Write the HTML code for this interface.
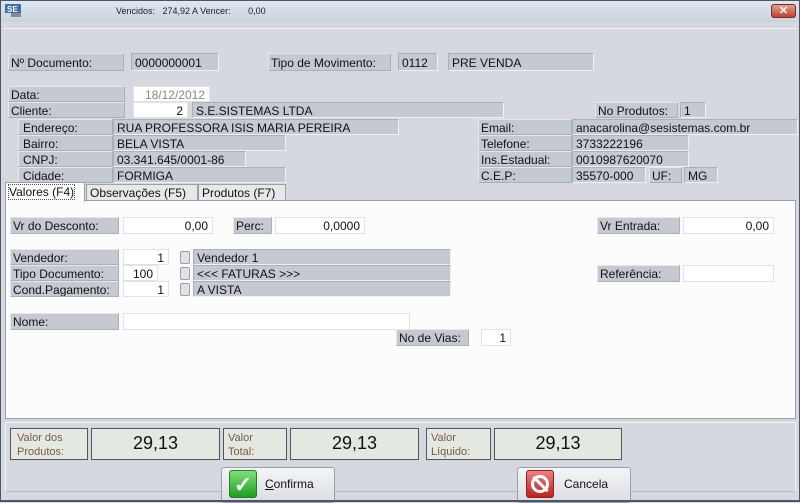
<!DOCTYPE html>
<html><head><meta charset="utf-8"><style>
*{box-sizing:border-box;margin:0;padding:0}
body{width:800px;height:502px;overflow:hidden;background:#d5d8de;font-family:"Liberation Sans",sans-serif;font-size:12px;color:#111;position:relative}
.a{position:absolute;white-space:nowrap;line-height:14px;overflow:hidden}
.l{background:#c4c9d2;border:1px solid #e4e7eb;border-right-color:#aab0b9;border-bottom-color:#aab0b9;padding:1px 2px}
.v{background:#c4c9d2;border:1px solid #aab0b9;border-right-color:#eef0f3;border-bottom-color:#eef0f3;padding:1px 3px}
.w{background:#fff;border:1px solid #e0e2e6;padding:1px 4px;text-align:right}
.b{background:#dfe2e6;border:1px solid #9aa0a8;border-radius:2px}
.t{border:1px solid #555;background:#e3e8e1}
</style></head><body>
<div class="a" style="left:0;top:0;width:800px;height:22px;background:linear-gradient(#dfe7f0,#c9d3de);border:1px solid #4b5766;border-bottom:none"></div>
<div class="a" style="top:4px;left:5px;width:16px;height:13px">
<svg width="16" height="13"><rect x="0" y="0" width="16" height="9" fill="#3f6fb0"/><text x="2" y="8" font-size="8" fill="#fff" font-family="Liberation Sans" font-weight="bold">SE</text><rect x="6" y="9" width="10" height="4" fill="#888"/></svg></div>
<div class="a" style="left:116px;top:4px;font-size:9px;color:#222">Vencidos:&nbsp;&nbsp; 274,92 A Vencer:&nbsp;&nbsp;&nbsp;&nbsp;&nbsp;&nbsp;&nbsp;0,00</div>
<div class="a" style="left:771px;top:4px;width:25px;height:14px;background:linear-gradient(#e8a090,#c0402c);border:1px solid #7a2a20;border-radius:3px;color:#fff;font-size:11px;line-height:12px;text-align:center;font-weight:bold">✕</div>
<div class="a" style="left:0;top:22px;width:800px;height:480px;border:1px solid #4b5766;border-top:none"></div>
<div class="a" style="left:4px;top:28px;width:792px;height:1px;background:#f4f5f7"></div>

<div class="a l" style="left:8px;top:53px;width:116px;height:18px;padding-top:2px">Nº Documento:</div>
<div class="a v" style="left:131px;top:53px;width:88px;height:18px;padding-top:2px">0000000001</div>
<div class="a l" style="left:268px;top:53px;width:123px;height:18px;padding-top:2px">Tipo de Movimento:</div>
<div class="a v" style="left:398px;top:53px;width:40px;height:18px;padding-top:2px">0112</div>
<div class="a v" style="left:448px;top:53px;width:146px;height:18px;padding-top:2px">PRE VENDA</div>

<div class="a l" style="left:8px;top:86px;width:117px;height:16px">Data:</div>
<div class="a w" style="left:133px;top:86px;width:77px;height:16px;color:#888">18/12/2012</div>
<div class="a l" style="left:8px;top:102px;width:117px;height:16px">Cliente:</div>
<div class="a w" style="left:133px;top:102px;width:55px;height:16px">2</div>
<div class="a v" style="left:192px;top:102px;width:312px;height:16px">S.E.SISTEMAS LTDA</div>
<div class="a l" style="left:595px;top:102px;width:83px;height:16px">No Produtos:</div>
<div class="a v" style="left:680px;top:102px;width:26px;height:16px">1</div>

<div class="a l" style="left:18px;top:119px;width:95px;height:16px;padding-left:4px">Endereço:</div>
<div class="a v" style="left:113px;top:119px;width:286px;height:16px">RUA PROFESSORA ISIS MARIA PEREIRA</div>
<div class="a l" style="left:18px;top:135px;width:95px;height:16px;padding-left:4px">Bairro:</div>
<div class="a v" style="left:113px;top:135px;width:173px;height:16px">BELA VISTA</div>
<div class="a l" style="left:18px;top:151px;width:95px;height:16px;padding-left:4px">CNPJ:</div>
<div class="a v" style="left:113px;top:151px;width:133px;height:16px">03.341.645/0001-86</div>
<div class="a l" style="left:18px;top:167px;width:95px;height:16px;padding-left:4px">Cidade:</div>
<div class="a v" style="left:113px;top:167px;width:173px;height:16px">FORMIGA</div>

<div class="a l" style="left:478px;top:119px;width:94px;height:16px">Email:</div>
<div class="a v" style="left:572px;top:119px;width:226px;height:16px">anacarolina@sesistemas.com.br</div>
<div class="a l" style="left:478px;top:135px;width:94px;height:16px">Telefone:</div>
<div class="a v" style="left:572px;top:135px;width:117px;height:16px">3733222196</div>
<div class="a l" style="left:478px;top:151px;width:94px;height:16px">Ins.Estadual:</div>
<div class="a v" style="left:572px;top:151px;width:117px;height:16px">0010987620070</div>
<div class="a l" style="left:478px;top:167px;width:94px;height:16px">C.E.P:</div>
<div class="a v" style="left:572px;top:167px;width:74px;height:16px">35570-000</div>
<div class="a l" style="left:649px;top:167px;width:33px;height:16px">UF:</div>
<div class="a v" style="left:684px;top:167px;width:34px;height:16px">MG</div>

<div class="a" style="left:5px;top:200px;width:791px;height:219px;background:#fcfcfd;border:1px solid #9ba1aa"></div>
<div class="a" style="left:86px;top:184px;width:112px;height:17px;background:#e6e8ec;border:1px solid #9ba1aa;padding:1px 3px">Observações (F5)</div>
<div class="a" style="left:198px;top:184px;width:88px;height:17px;background:#e6e8ec;border:1px solid #9ba1aa;padding:1px 3px">Produtos (F7)</div>
<div class="a" style="left:5px;top:182px;width:80px;height:20px;background:#fcfcfd;border:1px solid #9ba1aa;border-bottom:none;padding:2px 3px"><span style="outline:1px dotted #555">Valores (F4)</span></div>

<div class="a l" style="left:10px;top:217px;width:109px;height:17px">Vr do Desconto:</div>
<div class="a w" style="left:123px;top:217px;width:90px;height:17px">0,00</div>
<div class="a l" style="left:233px;top:217px;width:39px;height:17px">Perc:</div>
<div class="a w" style="left:275px;top:217px;width:90px;height:17px">0,0000</div>
<div class="a l" style="left:597px;top:217px;width:83px;height:17px">Vr Entrada:</div>
<div class="a w" style="left:683px;top:217px;width:91px;height:17px">0,00</div>

<div class="a l" style="left:10px;top:249px;width:109px;height:16px">Vendedor:</div>
<div class="a w" style="left:123px;top:249px;width:46px;height:16px">1</div>
<div class="a l" style="left:10px;top:265px;width:109px;height:16px">Tipo Documento:</div>
<div class="a w" style="left:123px;top:265px;width:35px;height:16px">100</div>
<div class="a l" style="left:10px;top:281px;width:109px;height:16px">Cond.Pagamento:</div>
<div class="a w" style="left:123px;top:281px;width:46px;height:16px">1</div>
<div class="a b" style="left:180px;top:251px;width:10px;height:13px"></div>
<div class="a b" style="left:180px;top:267px;width:10px;height:13px"></div>
<div class="a b" style="left:180px;top:283px;width:10px;height:13px"></div>
<div class="a v" style="left:193px;top:249px;width:258px;height:16px">Vendedor 1</div>
<div class="a v" style="left:193px;top:265px;width:258px;height:16px">&lt;&lt;&lt; FATURAS &gt;&gt;&gt;</div>
<div class="a v" style="left:193px;top:281px;width:258px;height:16px">A VISTA</div>
<div class="a l" style="left:597px;top:265px;width:83px;height:17px">Referência:</div>
<div class="a w" style="left:683px;top:265px;width:91px;height:17px"></div>

<div class="a l" style="left:10px;top:313px;width:109px;height:17px">Nome:</div>
<div class="a w" style="left:123px;top:313px;width:287px;height:17px"></div>
<div class="a l" style="left:396px;top:329px;width:73px;height:17px">No de Vias:</div>
<div class="a w" style="left:481px;top:329px;width:30px;height:17px">1</div>

<div class="a" style="left:5px;top:422px;width:791px;height:70px;border:1px solid #f2f3f5;border-bottom-color:#b4b9c0"></div>
<div class="a t" style="left:10px;top:428px;width:78px;height:32px;color:#7a5a48;font-size:11px;line-height:14px;padding:2px 6px">Valor dos<br>Produtos:</div>
<div class="a t" style="left:91px;top:428px;width:129px;height:32px;font-size:18px;line-height:28px;text-align:center">29,13</div>
<div class="a t" style="left:223px;top:428px;width:64px;height:32px;color:#7a5a48;font-size:11px;line-height:14px;padding:2px 4px">Valor<br>Total:</div>
<div class="a t" style="left:290px;top:428px;width:129px;height:32px;font-size:18px;line-height:28px;text-align:center">29,13</div>
<div class="a t" style="left:426px;top:428px;width:65px;height:32px;color:#7a5a48;font-size:11px;line-height:14px;padding:2px 4px">Valor<br>Líquido:</div>
<div class="a t" style="left:494px;top:428px;width:128px;height:32px;font-size:18px;line-height:28px;text-align:center">29,13</div>

<div class="a" style="left:221px;top:467px;width:114px;height:36px;background:linear-gradient(#f4f5f7,#dadde2);border:1px solid #9aa0a8;border-radius:3px"></div>
<div class="a" style="left:229px;top:470px;width:28px;height:28px;background:linear-gradient(#7ee07a,#1e9e1e);border:1px solid #2a7a2a;border-radius:3px;color:#fff;font-size:22px;line-height:28px;text-align:center;font-weight:bold">✓</div>
<div class="a" style="left:265px;top:477px;font-size:12px"><u>C</u>onfirma</div>
<div class="a" style="left:517px;top:467px;width:114px;height:36px;background:linear-gradient(#f4f5f7,#dadde2);border:1px solid #9aa0a8;border-radius:3px"></div>
<div class="a" style="left:526px;top:470px;width:28px;height:28px;background:linear-gradient(#f08080,#c02020);border:1px solid #8a2020;border-radius:3px"></div>
<div class="a" style="left:531px;top:475px;width:18px;height:18px;border:3px solid #fff;border-radius:50%"></div>
<div class="a" style="left:539px;top:474px;width:3px;height:20px;background:#fff;transform:rotate(-45deg)"></div>
<div class="a" style="left:564px;top:477px;font-size:12px">Cancela</div>
<div class="a" style="left:0;top:500px;width:800px;height:2px;background:#4b5766"></div>
</body></html>
